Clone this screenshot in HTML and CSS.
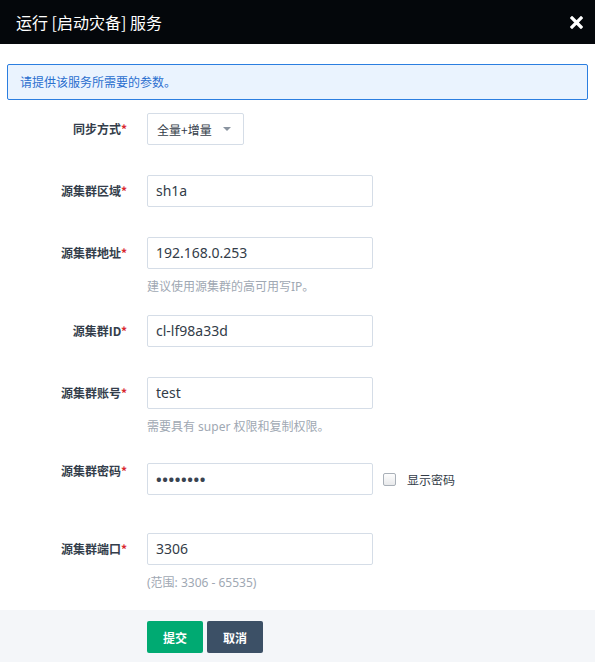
FILE: index.html
```html
<!DOCTYPE html>
<html lang="zh">
<head>
<meta charset="utf-8">
<link rel="stylesheet" href="styles.css">
</head>
<body>
<div class="modal">
  <div class="header">
    <span class="title">运行 [启动灾备] 服务</span>
    <span class="close" aria-label="关闭">
      <svg width="13" height="13" viewBox="0 0 13 13"><path d="M2 2 L11 11 M11 2 L2 11" stroke="#fff" stroke-width="3.2" stroke-linecap="square"/></svg>
    </span>
  </div>
  <div class="notice">请提供该服务所需要的参数。</div>
  <div class="form">
    <div class="row">
      <div class="label">同步方式<span class="req">*</span></div>
      <div class="control">
        <div class="select"><span>全量+增量</span><span class="caret"></span></div>
      </div>
    </div>
    <div class="row">
      <div class="label">源集群区域<span class="req">*</span></div>
      <div class="control"><div class="input">sh1a</div></div>
    </div>
    <div class="row hinted">
      <div class="label">源集群地址<span class="req">*</span></div>
      <div class="control">
        <div class="input">192.168.0.253</div>
        <div class="hint">建议使用源集群的高可用写IP。</div>
      </div>
    </div>
    <div class="row">
      <div class="label">源集群ID<span class="req">*</span></div>
      <div class="control"><div class="input">cl-lf98a33d</div></div>
    </div>
    <div class="row hinted">
      <div class="label">源集群账号<span class="req">*</span></div>
      <div class="control">
        <div class="input">test</div>
        <div class="hint">需要具有 super 权限和复制权限。</div>
      </div>
    </div>
    <div class="row">
      <div class="label">源集群密码<span class="req">*</span></div>
      <div class="control padded">
        <div class="input pwd">••••••••</div>
        <label class="check"><span class="box"></span><span>显示密码</span></label>
      </div>
    </div>
    <div class="row hinted last">
      <div class="label">源集群端口<span class="req">*</span></div>
      <div class="control">
        <div class="input">3306</div>
        <div class="hint">(范围: 3306 - 65535)</div>
      </div>
    </div>
  </div>
  <div class="footer">
    <button class="btn submit">提交</button>
    <button class="btn cancel">取消</button>
  </div>
</div>
</body>
</html>
```
FILE: styles.css
```css
html, body {
  margin: 0;
  padding: 0;
  background: #fff;
}
body {
  font-family: "Noto Sans", "Noto Sans CJK SC", sans-serif;
  color: #333c48;
}
.modal {
  width: 595px;
  min-height: 662px;
  display: flex;
  flex-direction: column;
  background: #fff;
}
.header {
  height: 44px;
  background: #04070b;
  display: flex;
  align-items: center;
  justify-content: space-between;
  padding: 0 12px 0 16px;
}
.title {
  color: #fff;
  font-size: 16px;
  font-family: "Noto Sans CJK SC", sans-serif;
}
.close {
  display: flex;
  width: 13px;
  height: 13px;
}
.notice {
  margin: 20px 7px 0 7px;
  height: 34px;
  border: 1px solid #2b7ee0;
  border-radius: 2px;
  background: #eaf3fe;
  color: #2a6fcf;
  font-size: 12px;
  font-family: "Noto Sans CJK SC", sans-serif;
  line-height: 34px;
  padding-left: 12px;
}
.form {
  padding-top: 13px;
  flex: 1;
}
.row {
  display: flex;
  margin-bottom: 30px;
}
.row.hinted {
  margin-bottom: 18px;
}
.row.last {
  margin-bottom: 17px;
}
.label {
  width: 127px;
  text-align: right;
  font-size: 12px;
  font-weight: bold;
  line-height: 32px;
  color: #343e4b;
  font-family: "Noto Sans CJK SC", sans-serif;
}
.req {
  color: #d9282f;
}
.control {
  margin-left: 20px;
  display: flex;
  flex-direction: column;
}
.control.padded {
  flex-direction: row;
  align-items: center;
  padding: 8px 0;
}
.input {
  box-sizing: border-box;
  width: 226px;
  height: 32px;
  border: 1px solid #d5dde7;
  border-radius: 2px;
  padding: 0 8px;
  font-size: 14px;
  line-height: 30px;
  color: #333c48;
}
.input.pwd {
  font-size: 15px;
  letter-spacing: 0.6px;
  font-weight: bold;
  color: #3a4350;
}
.select {
  box-sizing: border-box;
  width: 97px;
  height: 32px;
  border: 1px solid #d5dde7;
  border-radius: 2px;
  padding: 0 12px 0 9px;
  display: flex;
  align-items: center;
  justify-content: space-between;
  font-size: 12px;
  font-family: "Noto Sans CJK SC", sans-serif;
  color: #333c48;
}
.caret {
  width: 0;
  height: 0;
  border-left: 4px solid transparent;
  border-right: 4px solid transparent;
  border-top: 4px solid #8a94a0;
}
.hint {
  margin-top: 8px;
  line-height: 20px;
  font-size: 12px;
  color: #a0a8b3;
  font-family: "Noto Sans", "Noto Sans CJK SC", sans-serif;
}
.check {
  display: flex;
  align-items: center;
  margin-left: 10px;
  font-size: 12px;
  color: #333c48;
  font-family: "Noto Sans CJK SC", sans-serif;
}
.box {
  box-sizing: border-box;
  width: 13px;
  height: 13px;
  border: 1px solid #a9b0b8;
  border-radius: 2px;
  background: linear-gradient(#fdfdfd, #e8e9eb);
  margin-right: 11px;
}
.footer {
  background: #f4f6f9;
  padding: 11px 0 9px 147px;
  display: flex;
  gap: 4px;
}
.btn {
  width: 56px;
  height: 32px;
  border: none;
  border-radius: 2px;
  color: #fff;
  font-size: 12px;
  font-weight: bold;
  font-family: "Noto Sans CJK SC", sans-serif;
  padding: 0;
}
.submit {
  background: #00aa72;
}
.cancel {
  background: #3c5066;
}
```
